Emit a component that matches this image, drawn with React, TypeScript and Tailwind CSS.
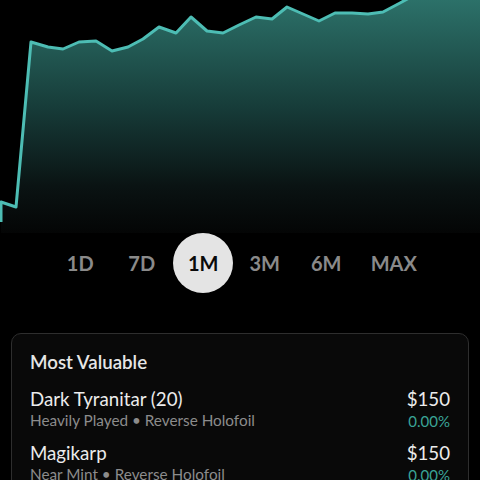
import React from "react";

const pts: [number, number][] = [
  [1, 222], [1, 202], [16, 207], [31, 42], [48, 47], [63, 49], [79, 42], [96, 41], [112, 51], [128, 47],
  [143, 39], [159, 27], [176, 33], [191, 17], [207, 31], [223, 33], [239, 25], [256, 17],
  [272, 19], [287, 7], [303, 14], [319, 21], [335, 13], [352, 13], [368, 14], [383, 12],
  [400, 3], [420, -8], [440, -14], [460, -20], [482, -26],
];

const linePath = pts.map((p, i) => `${i === 0 ? "M" : "L"}${p[0]} ${p[1]}`).join(" ");
const fillPath = `M1 202 ` + pts.slice(2).map((p) => `L${p[0]} ${p[1]}`).join(" ") + " L482 233 L1 233 Z";

const ranges = [
  { label: "1D", w: "w-[60px]" },
  { label: "7D", w: "w-[60px]" },
  { label: "1M", w: "w-[60px]", active: true },
  { label: "3M", w: "w-[60px]" },
  { label: "6M", w: "w-[60px]" },
  { label: "MAX", w: "w-[72px]" },
];

const items = [
  { name: "Dark Tyranitar (20)", sub: "Heavily Played • Reverse Holofoil", price: "$150", pct: "0.00%" },
  { name: "Magikarp", sub: "Near Mint • Reverse Holofoil", price: "$150", pct: "0.00%" },
];

export default function App() {
  return (
    <div className="w-[480px] h-[480px] bg-black overflow-hidden" style={{ fontFamily: "Lato, 'Open Sans', sans-serif" }}>
      <svg width="480" height="233" viewBox="0 0 480 233" className="block">
        <defs>
          <linearGradient id="g" x1="0" y1="0" x2="0" y2="233" gradientUnits="userSpaceOnUse">
            <stop offset="0" stopColor="#2c7169" />
            <stop offset="0.45" stopColor="#173d3a" />
            <stop offset="0.8" stopColor="#0a1313" />
            <stop offset="1" stopColor="#040505" />
          </linearGradient>
        </defs>
        <path d={fillPath} fill="url(#g)" />
        <path d={linePath} fill="none" stroke="#4dbdb4" strokeWidth="3" strokeLinejoin="round" />
      </svg>
      <div className="flex justify-center gap-[1.5px] h-[60px]">
        {ranges.map((r) => (
          <div
            key={r.label}
            className={`${r.w} h-[60px] flex items-center justify-center text-[20px] font-bold ${
              r.active ? "rounded-full bg-[#e4e4e4] text-[#0a0a0a]" : "text-[#8a8a8a]"
            }`}
          >
            {r.label}
          </div>
        ))}
      </div>
      <div className="mt-[40px] mx-[11px] rounded-[10px] border border-[#2e2e2e] bg-[#090909] px-[18px] pt-[15px] pb-4">
        <div className="text-[18.7px] font-semibold text-[#e6e6e6] leading-[26px]">Most Valuable</div>
        <div className="mt-[12px] flex flex-col gap-[10px]">
          {items.map((it) => (
            <div key={it.name} className="flex justify-between">
              <div>
                <div className="text-[18.7px] text-[#ececec] leading-[24px]">{it.name}</div>
                <div className="text-[15.3px] text-[#8c8c8c] leading-[18px]">{it.sub}</div>
              </div>
              <div className="text-right">
                <div className="text-[18.7px] text-[#ececec] leading-[24px]">{it.price}</div>
                <div className="text-[15px] text-[#3aa497] leading-[20px]">{it.pct}</div>
              </div>
            </div>
          ))}
        </div>
      </div>
    </div>
  );
}
